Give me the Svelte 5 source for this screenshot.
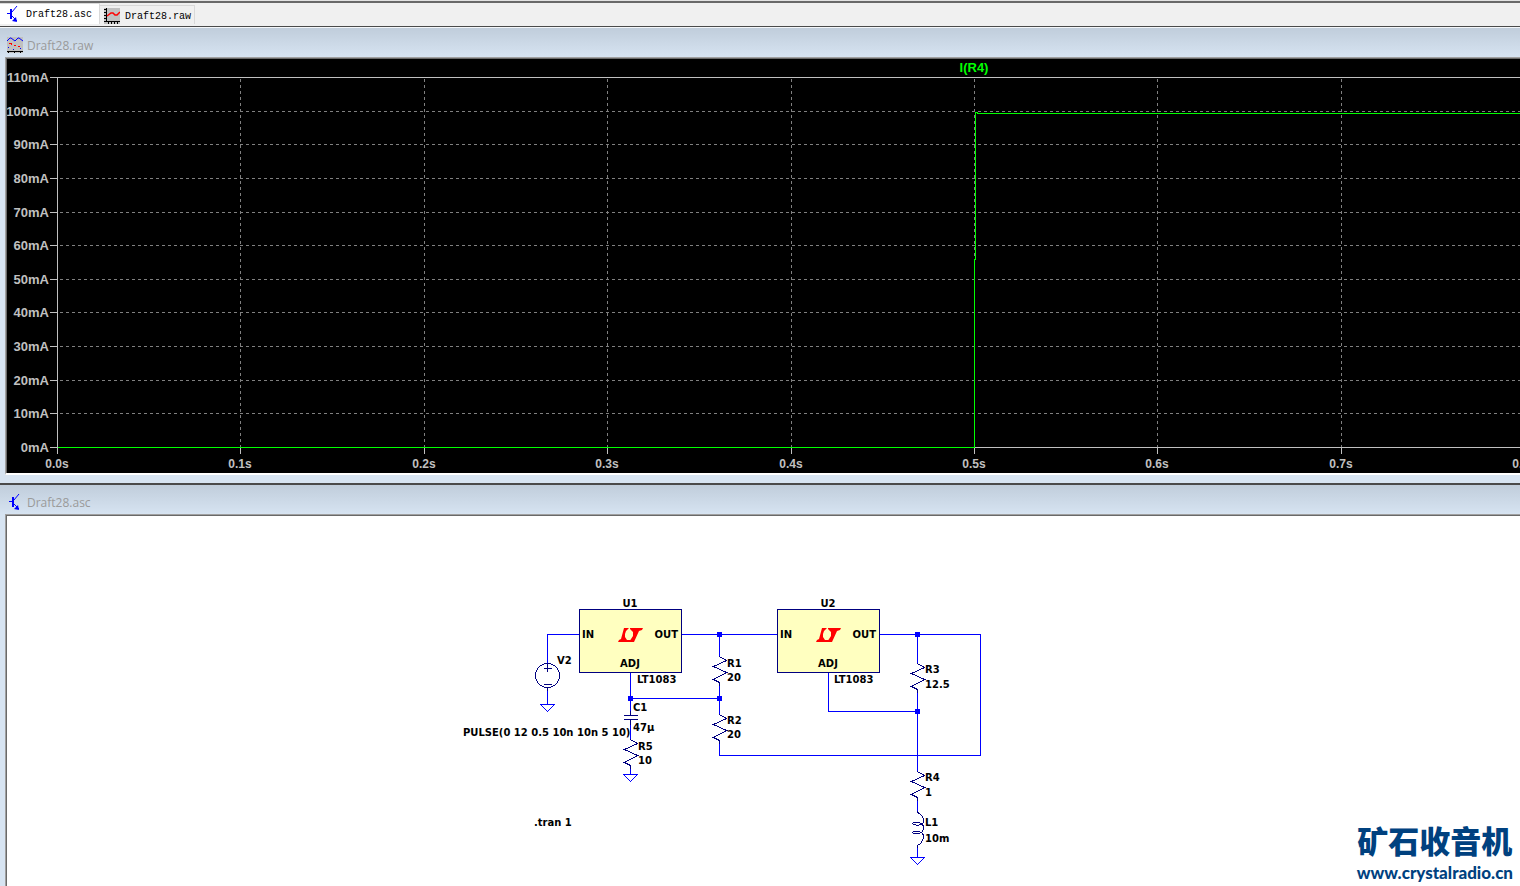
<script>
  const levels = [
    { label: '110mA', y: 18 },
    { label: '100mA', y: 52 },
    { label: '90mA', y: 85 },
    { label: '80mA', y: 119 },
    { label: '70mA', y: 153 },
    { label: '60mA', y: 186 },
    { label: '50mA', y: 220 },
    { label: '40mA', y: 253 },
    { label: '30mA', y: 287 },
    { label: '20mA', y: 321 },
    { label: '10mA', y: 354 },
    { label: '0mA', y: 388 }
  ];

  const times = [
    { label: '0.0s', x: 50 },
    { label: '0.1s', x: 233 },
    { label: '0.2s', x: 417 },
    { label: '0.3s', x: 600 },
    { label: '0.4s', x: 784 },
    { label: '0.5s', x: 967 },
    { label: '0.6s', x: 1150 },
    { label: '0.7s', x: 1334 },
    { label: '0.8s', x: 1517 },
    { label: '0.9s', x: 1700 },
    { label: '1.0s', x: 1884 }
  ];

  const wires = [
    'M540 146V118H572',
    'M540 172V188',
    'M674 118H770',
    'M872 118H973V239H712V224',
    'M712 118V140M712 168V198',
    'M623 156V182H712',
    'M623 182V199M623 204V223M623 250V258',
    'M821 156V195H910',
    'M910 118V147M910 174V255M910 281V296M910 329V341'
  ];

  const nodes = [
    { x: 712, y: 118 },
    { x: 910, y: 118 },
    { x: 623, y: 182 },
    { x: 712, y: 182 },
    { x: 910, y: 195 }
  ];

  const chips = [
    { name: 'U1', x: 572 },
    { name: 'U2', x: 770 }
  ];

  const resistors = [
    { x: 712, y: 140 },
    { x: 712, y: 198 },
    { x: 910, y: 147 },
    { x: 910, y: 255 },
    { x: 623, y: 223 }
  ];

  const grounds = [
    { x: 540, y: 188 },
    { x: 623, y: 258 },
    { x: 910, y: 341 }
  ];

  const labels = [
    { text: 'V2', x: 550, y: 148 },
    { text: 'LT1083', x: 630, y: 167 },
    { text: 'LT1083', x: 827, y: 167 },
    { text: 'R1', x: 720, y: 151 },
    { text: '20', x: 720, y: 165 },
    { text: 'R2', x: 720, y: 208 },
    { text: '20', x: 720, y: 222 },
    { text: 'R3', x: 918, y: 157 },
    { text: '12.5', x: 918, y: 172 },
    { text: 'R4', x: 918, y: 265 },
    { text: '1', x: 918, y: 280 },
    { text: 'L1', x: 918, y: 310 },
    { text: '10m', x: 918, y: 326 },
    { text: 'C1', x: 626, y: 195 },
    { text: '47µ', x: 626, y: 215 },
    { text: 'R5', x: 631, y: 234 },
    { text: '10', x: 631, y: 248 },
    { text: 'PULSE(0 12 0.5 10n 10n 5 10)', x: 456, y: 220 },
    { text: '.tran 1', x: 527, y: 310 }
  ];
</script>

{#snippet transistor()}
  <svg class="icon" viewBox="0 0 16 16" aria-hidden="true">
    <path d="M5 3h2v10H5zM2 7h3v1H2z" fill="#00f" />
    <path d="M7 6l5-6M7 10l5 5" stroke="#00f" fill="none" />
    <path d="M12 16l-5-1 4-4z" fill="#00f" />
  </svg>
{/snippet}

<div class="app">
  <nav class="tabs">
    <button class="tab active">
      {@render transistor()}
      <span>Draft28.asc</span>
    </button>
    <button class="tab">
      <svg class="icon" viewBox="0 0 16 16" aria-hidden="true">
        <path d="M0 0h16v16H0z" fill="#c0c0c0" />
        <path d="M2 0h1v13h13v1H2zM0 1h2v1H0zM0 4h2v1H0zM0 7h2v1H0zM0 10h2v1H0zM0 13h2v1H0zM4 14h1v2H4zM7 14h1v2H7zM10 14h1v2h-1zM13 14h1v2h-1z" fill="#000" />
        <path d="M3 8l4-3h2l2 2h2l3-3" stroke="#f00" stroke-width="1.500" fill="none" />
      </svg>
      <span>Draft28.raw</span>
    </button>
  </nav>

  <section class="window">
    <header class="titlebar">
      <svg class="icon" viewBox="0 0 16 16" aria-hidden="true">
        <path d="M0 0h16v16H0z" fill="#c0c0c0" />
        <path d="M0 4l3-3h1l4 3 3-3h1l4 3" stroke="#00f" fill="none" />
        <path d="M2 6h3v1H2zM11 9h2v1h-2zM7 8h2v1H7zM4 7h1v1H4z" fill="#f00" />
        <path d="M1 10h1v1H1zM6 12h1v1H6zM13 11h1v1h-1z" fill="#00f" />
        <path d="M0 14h16v1H0zM1 15h1v1H1zM7 15h1v1H7zM13 15h1v1h-1z" fill="#000" />
      </svg>
      <h2>Draft28.raw</h2>
    </header>
    <div class="pane plot">
      <svg class="drawing" role="img" aria-label="I(R4)" shape-rendering="crispEdges">
        <g class="grid">
          {#each levels.slice(1, -1) as level}
            <line x1="53" y1={level.y + 0.5} x2="1884" y2={level.y + 0.5} />
          {/each}
          {#each times.slice(1, -1) as time}
            <line x1={time.x + 0.5} y1="20" x2={time.x + 0.5} y2="388" />
          {/each}
        </g>
        <g class="axis">
          <path d="M43 18.500H1884M50.500 18V395M43 388.500H1884" />
          {#each levels as level}
            <line x1="43" y1={level.y + 0.5} x2="51" y2={level.y + 0.5} />
          {/each}
          {#each times as time}
            <line x1={time.x + 0.5} y1="388" x2={time.x + 0.5} y2="395" />
          {/each}
        </g>
        <g class="scale">
          {#each levels as level}
            <text class="level" x="42" y={level.y + 5} text-anchor="end">{level.label}</text>
          {/each}
          {#each times as time}
            <text x={time.x} y="409" text-anchor="middle">{time.label}</text>
          {/each}
        </g>
        <path class="trace" d="M51 388.500H967.500V200.500H968.500V53.500H970.500V54.500H1884" />
        <text class="trace-name" x="967" y="13" text-anchor="middle">I(R4)</text>
      </svg>
    </div>
  </section>

  <section class="window schematic-window">
    <header class="titlebar">
      {@render transistor()}
      <h2>Draft28.asc</h2>
    </header>
    <div class="pane schematic">
      <svg class="drawing" role="img" aria-label="Draft28.asc">
        <g transform="translate(0.5 0.5)" shape-rendering="crispEdges">
          {#each wires as d}
            <path class="wire" {d} />
          {/each}
          {#each resistors as r}
            <path class="part" transform="translate({r.x} {r.y})" d="M0 0L7 4L-6 10L7 16L-6 23L0 26V29" />
          {/each}
          {#each grounds as g}
            <path class="wire" transform="translate({g.x} {g.y})" d="M-7 0H7L0 7Z" />
          {/each}
          <circle class="part" cx="540" cy="159" r="12" />
          <path class="part" d="M540 146V155M536 152H544M536 168H544M540 171V174" />
          <path class="part" d="M616 199H630M616 203H630M623 194V199M623 203V208" />
          <path class="part" d="M910 294V296C915 298 916 302 916 305C916 310 905 309 905 307C905 305 916 305 916 311C916 319 905 318 905 316C905 314 916 314 916 320C916 324 913 328 910 329V331" />
        </g>
        {#each nodes as node}
          <rect class="node" x={node.x - 2} y={node.y - 2} width="5" height="5" />
        {/each}
        {#each chips as chip}
          <g transform="translate({chip.x} 93)">
            <rect class="chip" x="0.500" y="0.500" width="102" height="63" />
            <path class="logo" d="M45 19H50L47 22L46 25V28L48 31H52L51 33H39L40 31L42 30Z" />
            <path class="logo" d="M51 19H64L63 21L60 22L55 33H50L52 30L54 27V23L51 20Z" />
            <text x="51" y="-2" text-anchor="middle">{chip.name}</text>
            <text x="3" y="29">IN</text>
            <text x="99" y="29" text-anchor="end">OUT</text>
            <text x="51" y="58" text-anchor="middle">ADJ</text>
          </g>
        {/each}
        {#each labels as label}
          <text x={label.x} y={label.y}>{label.text}</text>
        {/each}
      </svg>
      <div class="watermark">
        <strong>矿石收音机</strong>
        <span>www.crystalradio.cn</span>
      </div>
    </div>
  </section>
</div>

<style>
  :global(body) {
    background: #d7e4f2;
  }

  .app {
    display: flex;
    flex-direction: column;
    height: 100vh;
    overflow: hidden;
    box-sizing: border-box;
    border-top: 1px solid #e3e3e3;
  }

  .tabs {
    display: flex;
    align-items: flex-start;
    height: 23px;
    background: #f0f0f0;
    border-top: 2px solid #696969;
    border-bottom: 1px solid #4a4a4a;
  }

  .tab {
    display: flex;
    align-items: center;
    gap: 5px;
    height: 19px;
    margin-top: 2px;
    padding: 2px 3px 0 4px;
    box-sizing: border-box;
    border: 1px solid #d9d9d9;
    border-width: 1px 1px 0 0;
    background: #f0f0f0;
    color: #000;
    font: 10px "Liberation Mono", monospace;
  }

  .tab.active {
    height: 21px;
    margin-top: 0;
    padding: 0 7px 0 5px;
    background: #fff;
  }

  .icon {
    flex: none;
    width: 16px;
    height: 16px;
  }

  .window {
    display: flex;
    flex-direction: column;
    padding-left: 5px;
    border-top: 1px solid #f4f7fa;
    background: linear-gradient(#c0cddb, #d7e4f2 30px);
  }

  .titlebar {
    display: flex;
    align-items: center;
    gap: 4px;
    height: 29px;
    padding: 5px 2px 0;
    box-sizing: border-box;
  }

  .titlebar h2 {
    margin: 0;
    color: #9a9a9a;
    font: 12px "Open Sans", sans-serif;
  }

  .pane {
    position: relative;
    padding: 1px 0 0 1px;
    border-top: 1px solid #a0a0a0;
    border-left: 1px solid #a0a0a0;
    box-shadow: inset 1px 1px #696969;
  }

  .plot {
    height: 414px;
    margin-bottom: 8px;
    border-bottom: 2px solid #fff;
    background: #000;
  }

  .schematic-window {
    flex: 1;
    min-height: 0;
    border-top: 2px solid #4a4a4a;
  }

  .schematic {
    flex: 1;
    min-height: 0;
    overflow: hidden;
    background: #fff;
  }

  .drawing {
    display: block;
    width: 100%;
    height: 100%;
  }

  .grid line {
    stroke: #808080;
    stroke-dasharray: 3 3;
  }

  .axis {
    fill: none;
    stroke: #c0c0c0;
  }

  .scale text {
    fill: #c0c0c0;
    font: bold 12px "Liberation Sans", sans-serif;
  }

  .scale .level {
    font-size: 13px;
  }

  .trace {
    fill: none;
    stroke: #0f0;
  }

  .trace-name {
    fill: #0f0;
    font: bold 13px "Liberation Sans", sans-serif;
  }

  .wire {
    fill: none;
    stroke: #00f;
  }

  .part {
    fill: none;
    stroke: #000080;
  }

  .node {
    fill: #00f;
  }

  .chip {
    fill: #ffffc0;
    stroke: #000080;
  }

  .logo {
    fill: #f00;
  }

  .schematic text {
    fill: #000;
    font: bold 10px "DejaVu Sans", sans-serif;
  }

  .watermark {
    position: absolute;
    right: 7px;
    bottom: 1px;
    display: flex;
    flex-direction: column;
    align-items: center;
    gap: 3px;
    color: #00417f;
  }

  .watermark strong {
    font: 900 31px/36px "Noto Sans CJK SC", sans-serif;
  }

  .watermark span {
    font: 900 17px/24px Lato, sans-serif;
  }
</style>
